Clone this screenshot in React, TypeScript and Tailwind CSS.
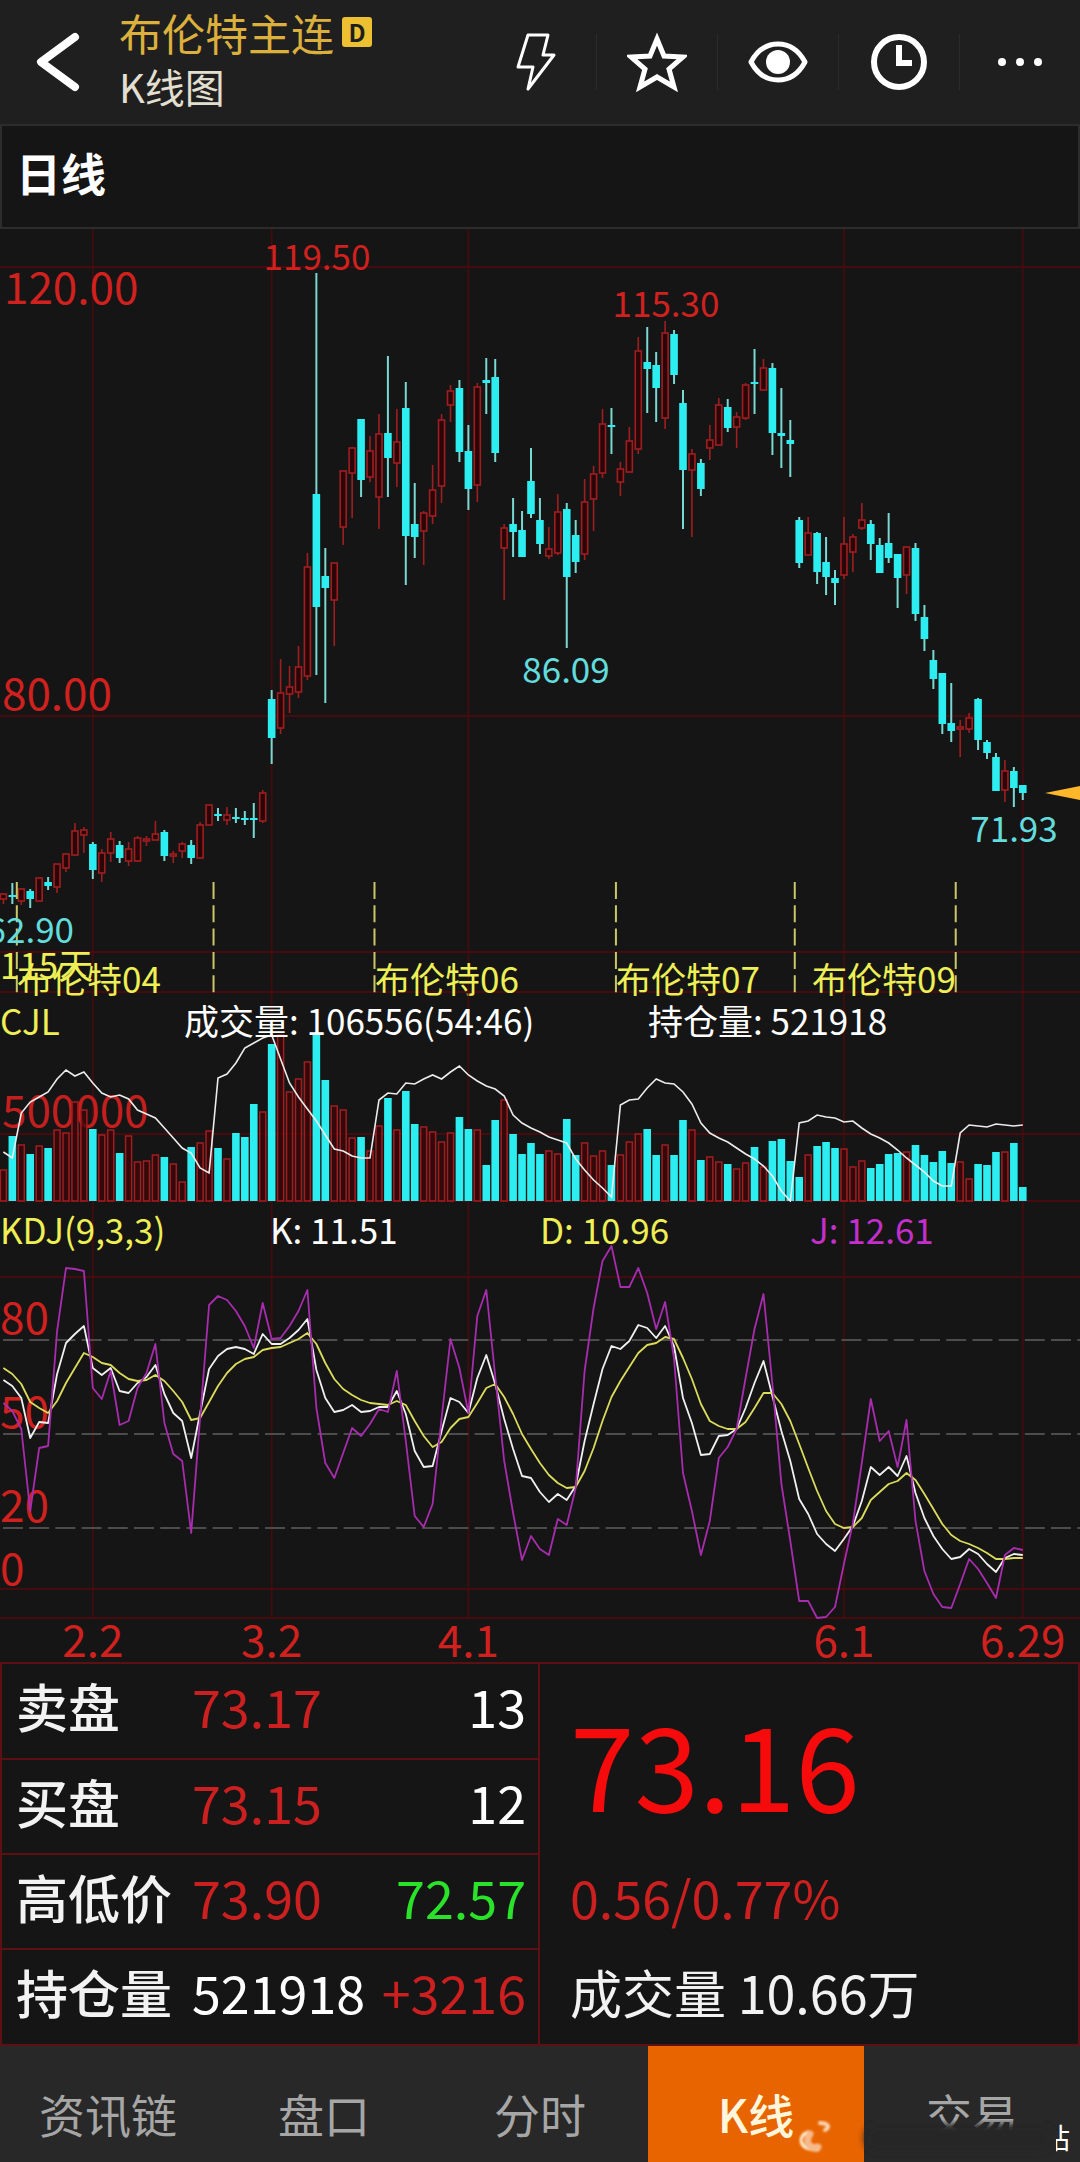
import type { ReactNode } from "react";
import { clsx } from "clsx";

type Direction = "up" | "down";

interface Candle {
  dir: Direction;
  high: number;
  top: number;
  bottom: number;
  low: number;
}

const WIDTH = 1080;
const STEP = 8.942;
const FIRST_X = 3.4;
const MONTH_TICKS = [
  { index: 10, label: "2.2" },
  { index: 30, label: "3.2" },
  { index: 52, label: "4.1" },
  { index: 94, label: "6.1" },
  { index: 114, label: "6.29" },
];

const CYAN = "#2ceef0";
const RED = "#a01e20";
const GRID = "#4e0a0e";

const xAt = (index: number) => FIRST_X + index * STEP;

// direction, high, body top, body bottom, low
const CANDLE_ROWS = `
u 664 665 670 675|d 654 666 668 675|u 659 660 672 676|d 660 662 670 679|u 649 649 672 672
d 648 653 657 661|u 635 635 658 664|u 625 625 639 643|u 594 602 626 626|u 598 601 606 624
d 613 615 641 650|u 620 624 644 653|u 603 610 624 633|d 612 616 629 634|u 613 620 632 637
u 607 609 632 633|u 607 610 611 617|u 592 605 611 611|d 601 603 627 632|u 622 625 626 634
u 613 615 622 629|d 611 616 629 635|u 593 596 629 629|u 576 576 596 596|d 579 585 586 592
u 578 586 591 596|d 579 588 589 594|d 582 589 590 596|d 574 589 591 609|u 561 564 592 594
d 461 470 509 535|u 430 464 499 505|u 437 458 465 484|u 417 438 463 469|u 324 338 447 451
d 44 265 378 446|d 319 347 359 474|u 334 334 371 417|u 242 242 298 316|u 218 219 244 289
d 190 190 251 268|u 207 222 248 253|u 185 205 268 300|d 127 204 229 268|u 180 213 234 258
d 153 179 307 356|d 254 295 308 329|u 282 284 302 336|u 236 261 287 295|u 185 191 257 274
u 156 162 176 193|d 151 159 223 233|d 196 222 260 281|u 154 158 256 273|d 129 151 154 185
d 130 148 224 233|u 295 299 319 371|d 269 295 303 328|d 282 301 328 328|d 219 252 285 289
d 269 291 315 325|u 298 320 327 330|u 265 283 324 326|d 274 280 348 419|d 291 306 333 344
u 250 273 325 331|u 237 245 270 302|u 180 195 244 249|d 179 196 197 225|u 233 240 253 267
u 198 212 243 243|u 108 122 220 225|d 98 133 140 184|d 123 136 159 193|u 92 104 189 200
d 101 105 146 155|d 161 174 241 300|u 220 225 241 308|d 230 234 260 267|u 196 211 219 231
u 169 176 216 216|d 170 178 199 203|u 183 188 198 219|u 154 156 189 191|d 120 153 155 185
u 130 139 161 161|d 134 139 204 226|d 159 204 207 239|d 191 211 215 248|d 288 291 334 339
u 288 304 326 326|d 303 304 343 355|d 308 333 348 366|d 341 349 354 376|u 288 315 346 350
u 305 308 323 343|u 274 291 299 301|d 291 295 315 331|d 309 316 344 344|d 284 314 329 334
d 325 325 349 379|u 318 318 346 365|d 314 319 385 392|d 376 388 410 422|d 421 431 450 460
d 444 444 495 505|d 454 494 502 513|u 491 498 499 528|u 484 489 500 504|d 469 470 511 521
d 511 513 524 530|d 524 528 562 562|u 531 542 561 573|d 538 542 559 578|d 556 556 564 571
`;

const candles: Candle[] = CANDLE_ROWS.trim()
  .split(/[|\n]/)
  .map((row) => {
    const [dir, high, top, bottom, low] = row.split(" ");
    return {
      dir: dir === "u" ? "up" : "down",
      high: Number(high),
      top: Number(top),
      bottom: Number(bottom),
      low: Number(low),
    };
  });

const volumes = [
  31, 65, 56, 47, 55, 53, 71, 68, 99, 91, 72, 66, 71, 48, 65, 39, 40, 46, 44, 37, 19, 54, 58, 70, 53,
  42, 68, 64, 97, 89, 157, 166, 109, 122, 139, 166, 121, 95, 91, 63, 64, 50, 75, 103, 71, 110, 77, 74,
  69, 59, 68, 84, 72, 71, 36, 81, 101, 67, 47, 58, 47, 50, 47, 82, 46, 58, 45, 50, 36, 46, 59, 67, 72,
  46, 56, 46, 81, 71, 41, 44, 39, 37, 32, 38, 54, 34, 60, 62, 40, 24, 46, 55, 59, 53, 52, 34, 40, 33,
  37, 47, 48, 49, 56, 46, 39, 50, 38, 39, 22, 37, 36, 49, 49, 58, 14,
];

const openInterest = [
  159, 165, 120, 109, 104, 99, 86, 77, 83, 79, 90, 100, 104, 102, 106, 117, 121, 125, 135, 145, 155,
  160, 175, 180, 85, 81, 70, 55, 50, 45, 42, 66, 90, 104, 116, 128, 142, 156, 158, 163, 165, 165, 107,
  100, 101, 90, 91, 86, 82, 86, 79, 73, 82, 88, 93, 96, 103, 122, 130, 135, 139, 144, 147, 150, 166,
  177, 187, 195, 204, 112, 107, 106, 95, 86, 90, 91, 99, 111, 130, 140, 145, 149, 155, 161, 166, 173,
  183, 198, 208, 130, 128, 122, 124, 125, 129, 128, 135, 141, 145, 150, 157, 165, 172, 179, 188, 193,
  193, 140, 132, 133, 134, 131, 132, 133, 132,
];

const kLine = [
  178, 184, 196, 236, 220, 221, 172, 141, 132, 124, 166, 173, 166, 189, 191, 181, 175, 163, 192, 211,
  219, 256, 211, 167, 154, 147, 145, 147, 152, 132, 142, 142, 136, 128, 117, 168, 196, 210, 208, 203,
  210, 209, 205, 205, 189, 212, 249, 265, 264, 229, 196, 200, 211, 176, 153, 182, 217, 247, 274, 276,
  290, 300, 292, 298, 284, 239, 202, 167, 144, 147, 139, 123, 126, 136, 124, 144, 196, 221, 253, 252,
  234, 233, 227, 206, 181, 159, 194, 229, 259, 297, 312, 332, 342, 349, 337, 324, 299, 265, 273, 265,
  274, 254, 291, 316, 334, 347, 357, 355, 347, 352, 362, 370, 356, 352, 353,
];

const dLine = [
  166, 172, 182, 200, 206, 211, 199, 181, 166, 151, 155, 161, 163, 171, 177, 179, 178, 173, 179, 189,
  200, 218, 216, 200, 184, 171, 162, 157, 155, 148, 146, 145, 141, 137, 131, 142, 161, 177, 187, 193,
  198, 201, 202, 203, 199, 203, 219, 234, 245, 240, 226, 217, 215, 201, 186, 182, 195, 212, 232, 247,
  261, 273, 281, 286, 285, 269, 246, 219, 195, 179, 165, 151, 143, 141, 135, 137, 156, 177, 202, 219,
  224, 227, 227, 220, 206, 191, 191, 202, 219, 242, 266, 289, 309, 322, 326, 325, 316, 298, 290, 282,
  279, 271, 278, 292, 307, 322, 333, 339, 342, 346, 351, 357, 357, 356, 356,
];

const jLine = [
  201, 209, 227, 309, 246, 244, 129, 66, 67, 69, 186, 197, 169, 223, 219, 186, 171, 142, 221, 252, 259,
  331, 216, 103, 94, 98, 109, 124, 146, 101, 137, 136, 124, 109, 88, 206, 261, 276, 251, 226, 234, 222,
  207, 210, 169, 239, 314, 325, 302, 216, 137, 166, 211, 114, 88, 174, 259, 311, 358, 334, 347, 353,
  317, 323, 286, 169, 106, 59, 44, 85, 85, 66, 91, 127, 100, 156, 271, 309, 353, 319, 256, 245, 227,
  176, 127, 92, 182, 282, 339, 399, 399, 416, 415, 405, 362, 321, 261, 197, 239, 229, 265, 218, 319,
  369, 392, 405, 406, 382, 357, 367, 381, 396, 353, 346, 348,
];

const toPoints = (values: number[]) =>
  values.map((value, index) => `${xAt(index).toFixed(1)},${value}`).join(" ");

function MonthLines({ height }: { height: number }) {
  return (
    <g stroke={GRID} strokeWidth={2} opacity={0.75}>
      {MONTH_TICKS.map(({ index }) => (
        <line key={index} x1={xAt(index)} x2={xAt(index)} y1={0} y2={height} />
      ))}
    </g>
  );
}

function RowLine({ y }: { y: number }) {
  return <line x1={0} x2={WIDTH} y1={y} y2={y} stroke={GRID} strokeWidth={2} opacity={0.85} />;
}

function PriceChart() {
  const rollovers = [1.5, 23.5, 41.5, 68.5, 88.5, 106.5];

  return (
    <svg
      viewBox="0 0 1080 764"
      className="block h-auto w-full overflow-visible"
      role="img"
      aria-label="日线K线图"
    >
      <MonthLines height={764} />
      <RowLine y={38} />
      <RowLine y={487} />
      <RowLine y={723} />
      <RowLine y={763} />

      <g fill="#d0211f" fontSize={44}>
        <text x={4} y={75}>120.00</text>
        <text x={2} y={481}>80.00</text>
      </g>

      {candles.map(({ dir, high, top, bottom, low }, index) => {
        const x = xAt(index);
        const height = Math.max(bottom - top, 2);
        return dir === "down" ? (
          <g key={index}>
            <line x1={x} x2={x} y1={high} y2={low} stroke="#7ad8d2" strokeWidth={2} />
            <rect x={x - 3.8} y={top} width={7.6} height={height} fill={CYAN} />
          </g>
        ) : (
          <g key={index} stroke={RED} strokeWidth={1.6}>
            <line x1={x} x2={x} y1={high} y2={top} />
            <line x1={x} x2={x} y1={top + height} y2={low} />
            <rect x={x - 3} y={top} width={6} height={height} fill="#2a0608" />
          </g>
        );
      })}

      <g stroke="#c9c768" strokeWidth={2} strokeDasharray="17 6.3">
        {rollovers.map((index) => (
          <line key={index} x1={xAt(index)} x2={xAt(index)} y1={653} y2={764} />
        ))}
      </g>

      <g fontSize={35}>
        <g fill="#d0211f" textAnchor="middle">
          <text x={317} y={41}>119.50</text>
          <text x={666} y={88}>115.30</text>
        </g>
        <g fill="#62dcdc">
          <text x={566} y={454} textAnchor="middle">86.09</text>
          <text x={1014} y={613} textAnchor="middle">71.93</text>
          <text x={74} y={714} textAnchor="end">62.90</text>
        </g>
        <g fill="#eeee55">
          <text x={0} y={750}>115天</text>
          <text x={17} y={764}>布伦特04</text>
          <text x={375} y={764}>布伦特06</text>
          <text x={616} y={764}>布伦特07</text>
          <text x={812} y={764}>布伦特09</text>
        </g>
      </g>

      <path d="M1045 564 L1080 557 V571 Z" fill="#fdb72a" />
    </svg>
  );
}

function VolumeChart() {
  return (
    <div className="relative">
      <svg viewBox="0 0 1080 209" className="block h-auto w-full" role="img" aria-label="成交量与持仓量">
        <MonthLines height={209} />
        <RowLine y={141} />
        <RowLine y={208} />
        <text x={2} y={134} fontSize={44} fill="#c41f1f">500000</text>
        {volumes.map((height, index) => {
          const x = xAt(index);
          return candles[index].dir === "down" ? (
            <rect key={index} x={x - 3.8} y={208 - height} width={7.6} height={height} fill={CYAN} />
          ) : (
            <rect
              key={index}
              x={x - 3}
              y={208 - height}
              width={6}
              height={height}
              fill="#3d0608"
              fillOpacity={0.75}
              stroke={RED}
              strokeWidth={1.5}
            />
          );
        })}
        <polyline points={toPoints(openInterest)} fill="none" stroke="#ececec" strokeWidth={1.6} />
      </svg>
      <div className="absolute inset-x-0 top-1 grid grid-cols-[184fr_464fr_432fr] text-[35px] leading-[46px] whitespace-nowrap text-white">
        <span className="text-[#eeee55]">CJL</span>
        <span>成交量: 106556(54:46)</span>
        <span>持仓量: 521918</span>
      </div>
    </div>
  );
}

function KdjChart() {
  return (
    <div className="relative">
      <svg viewBox="0 0 1080 460" className="block h-auto w-full" role="img" aria-label="KDJ指标">
        <MonthLines height={416} />
        <RowLine y={75} />
        <RowLine y={387} />
        <RowLine y={416} />
        <g stroke="#4c4c4c" strokeWidth={2} strokeDasharray="20 6.2">
          <line x1={3} x2={WIDTH} y1={138} y2={138} />
          <line x1={3} x2={WIDTH} y1={232} y2={232} />
          <line x1={3} x2={WIDTH} y1={326} y2={326} />
        </g>
        <g fill="#d0211f" fontSize={44}>
          <text x={0} y={132}>80</text>
          <text x={0} y={226}>50</text>
          <text x={0} y={320}>20</text>
          <text x={0} y={383}>0</text>
        </g>
        <g fill="none" strokeWidth={1.8} strokeLinejoin="round">
          <polyline points={toPoints(kLine)} stroke="#f0f0f0" />
          <polyline points={toPoints(dLine)} stroke="#dcdc5c" />
          <polyline points={toPoints(jLine)} stroke="#a82cae" />
        </g>
        <g fill="#d0211f" fontSize={44} textAnchor="middle">
          {MONTH_TICKS.map(({ index, label }) => (
            <text key={label} x={xAt(index)} y={455}>
              {label}
            </text>
          ))}
        </g>
      </svg>
      <div className="absolute inset-x-0 top-1 grid grid-cols-4 text-[35px] leading-[46px] text-white">
        <span className="text-[#eeee55]">KDJ(9,3,3)</span>
        <span>K: 11.51</span>
        <span className="text-[#eeee55]">D: 10.96</span>
        <span className="text-[#c22fc9]">J: 12.61</span>
      </div>
    </div>
  );
}

function IconButton({ label, children }: { label: string; children: ReactNode }) {
  return (
    <button
      type="button"
      aria-label={label}
      className="flex h-14 w-[121px] items-center justify-center border-l border-[#2a2a2a] first:border-l-0"
    >
      {children}
    </button>
  );
}

function Header() {
  return (
    <header className="flex h-[124px] items-center bg-[#1f1f1f]">
      <button type="button" aria-label="返回" className="flex w-[119px] justify-start pl-8">
        <svg viewBox="0 0 48 60" className="h-[60px] w-12" fill="none" stroke="#fff" strokeWidth={8}>
          <path d="M43 5 L9 30 L43 55" strokeLinecap="round" strokeLinejoin="round" />
        </svg>
      </button>
      <div className="flex flex-1 flex-col pb-2 whitespace-nowrap">
        <h1 className="flex items-center gap-2 text-[43px] leading-[56px] text-[#dcb03c]">
          布伦特主连
          <span className="flex size-[30px] items-center justify-center rounded-[3px] bg-[#ecc030] text-2xl font-bold text-[#1f1f1f]">
            D
          </span>
        </h1>
        <p className="text-[40px] leading-[52px] text-[#e2dfd0]">K线图</p>
      </div>
      <nav className="flex" aria-label="工具">
        <IconButton label="闪电下单">
          <svg viewBox="0 0 42 60" className="h-[60px] w-[42px]" fill="none" stroke="#fff" strokeWidth={3}>
            <path d="M13 3 H33 L28 23 H39 L13 57 L18 35 H3 Z" strokeLinejoin="round" />
          </svg>
        </IconButton>
        <IconButton label="自选">
          <svg viewBox="0 0 60 60" className="size-[60px]" fill="none" stroke="#fff" strokeWidth={5}>
            <path d="M30 7 L37 24 L56 25 L42 37 L47 55 L30 45 L13 55 L18 37 L4 25 L23 24 Z" />
          </svg>
        </IconButton>
        <IconButton label="看盘">
          <svg viewBox="0 0 60 44" className="h-11 w-[60px]">
            <path
              d="M3 22 C10 9 19 4 30 4 S50 9 57 22 C50 35 41 40 30 40 S10 35 3 22 Z"
              fill="none"
              stroke="#fff"
              strokeWidth={5}
              strokeLinejoin="round"
            />
            <circle cx={30} cy={22} r={12} fill="#fff" />
          </svg>
        </IconButton>
        <IconButton label="周期">
          <svg viewBox="0 0 60 60" className="size-[60px]" fill="none" stroke="#fff" strokeWidth={6}>
            <circle cx={30} cy={30} r={25} />
            <path d="M30 13 V31 H43" />
          </svg>
        </IconButton>
        <IconButton label="更多">
          <svg viewBox="0 0 48 10" className="h-2.5 w-12" fill="#fff">
            <circle cx={6} cy={5} r={4} />
            <circle cx={24} cy={5} r={4} />
            <circle cx={42} cy={5} r={4} />
          </svg>
        </IconButton>
      </nav>
    </header>
  );
}

const QUOTE_ROWS = [
  { label: "卖盘", first: "73.17", second: "13", firstClass: "text-[#cc1f1f]", secondClass: "text-white" },
  { label: "买盘", first: "73.15", second: "12", firstClass: "text-[#cc1f1f]", secondClass: "text-white" },
  { label: "高低价", first: "73.90", second: "72.57", firstClass: "text-[#cc1f1f]", secondClass: "text-[#2be22b]" },
  { label: "持仓量", first: "521918", second: "+3216", firstClass: "text-white", secondClass: "text-[#cc1f1f]" },
];

function QuotePanel() {
  return (
    <section className="grid grid-cols-2 border-2 border-[#5c1012] text-[52px] leading-[64px] whitespace-nowrap text-[#f2f2f2]">
      <table className="w-full border-r-2 border-[#5c1012]">
        <tbody>
          {QUOTE_ROWS.map(({ label, first, second, firstClass, secondClass }) => (
            <tr key={label} className="h-[95px] border-b-2 border-[#5c1012] last:border-b-0">
              <th scope="row" className="w-[190px] pb-2.5 pl-3.5 text-left font-medium">
                {label}
              </th>
              <td className={clsx("pb-2.5", firstClass)}>{first}</td>
              <td className={clsx("pr-3 pb-2.5 text-right", secondClass)}>{second}</td>
            </tr>
          ))}
        </tbody>
      </table>
      <div className="flex flex-col pl-[30px]">
        <strong className="flex h-[190px] items-center pt-1 text-[116px] font-normal text-[#f50b0b]">
          73.16
        </strong>
        <span className="flex h-[95px] items-center pb-2.5 text-[#cc1f1f]">0.56/0.77%</span>
        <span className="flex h-[95px] items-center pb-2.5">成交量 10.66万</span>
      </div>
    </section>
  );
}

const TABS = ["资讯链", "盘口", "分时", "K线", "交易"];

function BottomTabs() {
  return (
    <nav className="relative grid min-h-[118px] flex-1 grid-cols-5 bg-[#282828]">
      {TABS.map((tab) => (
        <button
          key={tab}
          type="button"
          aria-current={tab === "K线" ? "page" : undefined}
          className={clsx(
            "pt-4 text-[46px] leading-[60px]",
            tab === "K线" ? "bg-[#e86400] font-medium text-[#fff6dc]" : "text-[#a6a6a6]"
          )}
        >
          {tab}
        </button>
      ))}
      <svg
        viewBox="0 0 288 44"
        className="pointer-events-none absolute right-0 bottom-0 h-11 w-72"
        aria-hidden="true"
      >
        <defs>
          <filter id="smudge" x="-10%" y="-50%" width="120%" height="200%">
            <feGaussianBlur stdDeviation={3} />
          </filter>
          <filter id="curl" x="-20%" y="-20%" width="140%" height="140%">
            <feGaussianBlur stdDeviation={1} />
          </filter>
          <clipPath id="edge">
            <rect x={264} y={0} width={24} height={44} />
          </clipPath>
        </defs>
        <rect x={72} y={4} width={190} height={28} rx={14} fill="#262626" filter="url(#smudge)" />
        <g fill="none" strokeLinecap="round" filter="url(#curl)">
          <path d="M16 12 C5 16 6 30 26 30" stroke="#fff3dc" strokeWidth={3} />
          <path d="M18 14 C13 22 16 29 26 27" stroke="#f7b98a" strokeWidth={7} />
          <path d="M28 3 C37 3 38 8 33 10" stroke="#f9d8b8" strokeWidth={4} />
        </g>
        <text x={250} y={29} fontSize={28} fill="#fff" clipPath="url(#edge)">站</text>
      </svg>
    </nav>
  );
}

export default function App() {
  return (
    <main className="flex min-h-screen flex-col overflow-hidden bg-[#151515] font-['Noto_Sans_CJK_SC','Noto_Sans',sans-serif]">
      <Header />
      <h2 className="flex h-[105px] items-center border-2 border-[#2c2c2c] pb-2 pl-3.5 text-[45px] leading-[60px] font-bold text-white">
        日线
      </h2>
      <PriceChart />
      <VolumeChart />
      <KdjChart />
      <QuotePanel />
      <BottomTabs />
    </main>
  );
}
